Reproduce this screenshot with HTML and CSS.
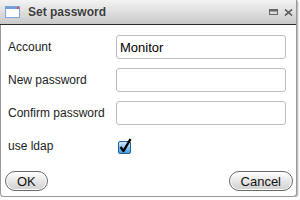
FILE: index.html
```html
<!DOCTYPE html>
<html lang="en">

<head>
  <meta charset="UTF-8">
  <meta name="viewport" content="width=device-width, initial-scale=1.0">
  <title>Set password</title>
  <link rel="stylesheet" href="styles.css">
</head>

<body>
  <div class="dialog">
    <div class="titlebar">
      <svg class="titlebar__icon" width="15" height="12" viewBox="0 0 15 12">
        <rect x="0.5" y="0.5" width="14" height="11" fill="#fff" stroke="#7ea6d4"/>
        <rect x="1" y="1" width="13" height="2" fill="#6d9fd8"/>
        <rect x="12" y="1" width="2" height="2" fill="#e04040"/>
      </svg>
      <span class="titlebar__title">Set password</span>
      <span class="titlebar__tools">
        <svg width="9" height="6" viewBox="0 0 9 6">
          <rect x="0.5" y="0.5" width="8" height="5" fill="#ddd" stroke="#666"/>
          <rect x="1" y="1" width="7" height="1.5" fill="#666"/>
        </svg>
        <svg width="9" height="7" viewBox="0 0 9 7">
          <path d="M1 0.5 L8 6.5 M8 0.5 L1 6.5" stroke="#555" stroke-width="1.6"/>
        </svg>
      </span>
    </div>
    <div class="form">
      <label class="form__label">Account</label>
      <input class="form__input" type="text" value="Monitor">
      <label class="form__label">New password</label>
      <input class="form__input" type="password">
      <label class="form__label">Confirm password</label>
      <input class="form__input" type="password">
      <label class="form__label">use ldap</label>
      <span class="check">
        <svg width="16" height="18" viewBox="0 0 16 18">
          <defs>
            <linearGradient id="cb" x1="0" y1="0" x2="0" y2="1">
              <stop offset="0" stop-color="#d4ecff"/>
              <stop offset="1" stop-color="#3f9be6"/>
            </linearGradient>
          </defs>
          <rect x="1.5" y="5.5" width="12" height="12" rx="1.5" fill="url(#cb)" stroke="#24618f"/>
          <path d="M3.5 11 L6.5 15 L13.5 3" fill="none" stroke="#000" stroke-width="2.4" stroke-linejoin="round"/>
        </svg>
      </span>
    </div>
    <div class="footer">
      <button class="btn">OK</button>
      <button class="btn">Cancel</button>
    </div>
  </div>
</body>

</html>
```

FILE: styles.css
```css
body {
  margin: 0;
  background-color: #fff;
}

* {
  font-family: "Liberation Sans", Arial, sans-serif;
}

.dialog {
  background-color: #fff;
  border: 1px solid #9a9a9a;
  border-top: none;
  border-radius: 0 0 4px 4px;
  box-shadow: 1px 1px 2px rgba(0, 0, 0, .35);
  box-sizing: border-box;
  display: flex;
  flex-direction: column;
  height: 197px;
  width: 297px;
}

.titlebar {
  align-items: center;
  background: linear-gradient(#f3f3f3, #c9c9c9);
  border-bottom: 1px solid #2a2a2a;
  display: flex;
  flex-shrink: 0;
  height: 24px;
  margin-left: -1px;
  padding-left: 5px;
}

.titlebar__icon {
  margin-right: 8px;
}

.titlebar__title {
  color: #3a3a3a;
  font-size: 12px;
  font-weight: bold;
  text-shadow: 0 0 1px #fff;
}

.titlebar__tools {
  align-items: center;
  display: flex;
  gap: 6px;
  margin-left: auto;
  margin-right: 3px;
}

.form {
  align-items: center;
  display: grid;
  grid-template-columns: 108px 170px;
  grid-auto-rows: 24px;
  row-gap: 9px;
  padding: 10px 0 0 7px;
}

.form__label {
  color: #222;
  font-size: 12px;
}

.form__input {
  border: 1px solid #bdbdbd;
  border-radius: 3px;
  box-sizing: border-box;
  color: #000;
  font-size: 13px;
  height: 24px;
  outline: none;
  padding: 0 3px;
  width: 170px;
}

.check {
  display: flex;
  height: 24px;
  align-items: center;
  padding-left: 1px;
  margin-top: -2px;
}

.footer {
  display: flex;
  justify-content: space-between;
  margin-top: auto;
  padding: 0 3px 5px 4px;
}

.btn {
  appearance: none;
  background: linear-gradient(#ffffff, #e2e2e2 60%, #cfcfcf);
  border: 1px solid #6a6a6a;
  border-radius: 10px;
  color: #111;
  font-size: 13px;
  height: 20px;
  padding: 0 11px;
  box-shadow: inset 0 0 0 1px #fff;
}
```
